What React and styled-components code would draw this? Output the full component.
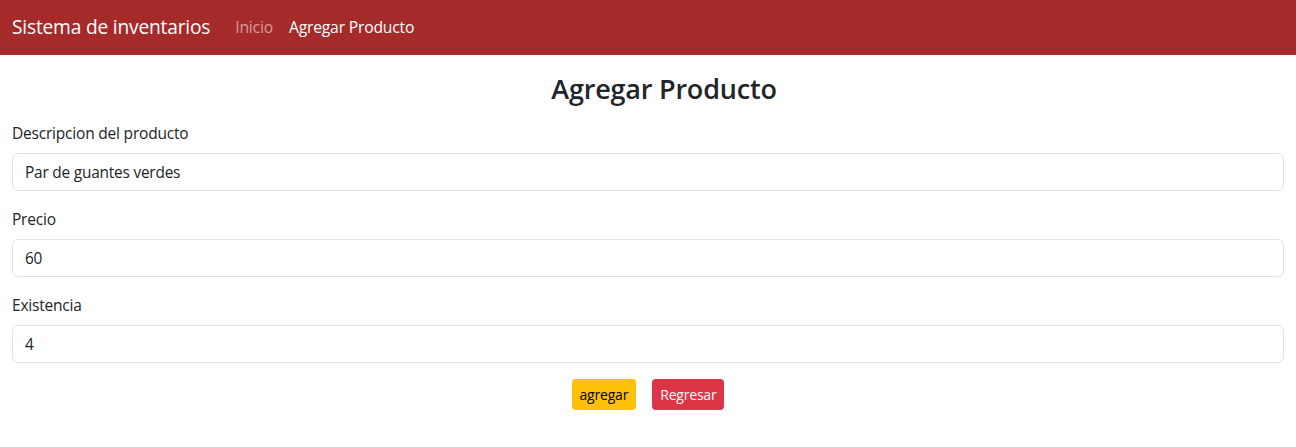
import React from "react";
import styled, { createGlobalStyle } from "styled-components";

const Global = createGlobalStyle`
  * { box-sizing: border-box; }
  body {
    margin: 0;
    font-family: "Open Sans", "Noto Sans", "Liberation Sans", sans-serif;
    color: #212529;
    background: #fff;
    font-size: 16px;
    line-height: 1.5;
  }
`;

const Navbar = styled.nav`
  height: 55px;
  background: #a52a2a;
  display: flex;
  align-items: center;
  padding: 0 12px;
`;

const Brand = styled.span`
  font-size: 19.2px;
  color: #fff;
  margin-right: 25px;
  letter-spacing: -0.2px;
`;

const NavLink = styled.a`
  font-size: 15.7px;
  color: ${(p) => (p.$active ? "#fff" : "rgba(255,255,255,0.55)")};
  text-decoration: none;
  margin-right: 16px;
  letter-spacing: -0.2px;
`;

const Main = styled.main`
  padding: 0 12px;
`;

const Title = styled.h2`
  margin: 17px 0 15px;
  padding-left: 32px;
  text-align: center;
  font-size: 27px;
  line-height: 34px;
  font-weight: 600;
  letter-spacing: -0.2px;
`;

const Field = styled.div`
  margin-bottom: 16px;
`;

const Label = styled.label`
  display: block;
  font-size: 15.5px;
  line-height: 24px;
  margin-bottom: 8px;
  letter-spacing: -0.2px;
`;

const Input = styled.input`
  display: block;
  width: 100%;
  height: 38px;
  padding: 6px 12px;
  font-family: inherit;
  font-size: 15.4px;
  color: #212529;
  border: 1px solid #dee2e6;
  border-radius: 6px;
  background: #fff;
  outline: none;
  letter-spacing: -0.2px;
`;

const Actions = styled.div`
  display: flex;
  justify-content: center;
  gap: 16px;
`;

const Button = styled.button`
  height: 31px;
  padding: 0 8px;
  font-family: inherit;
  font-size: 14px;
  border: none;
  border-radius: 4px;
  background: ${(p) => p.$bg};
  color: ${(p) => p.$fg};
  letter-spacing: -0.2px;
  cursor: pointer;
`;

export default function App() {
  return (
    <>
      <Global />
      <Navbar>
        <Brand>Sistema de inventarios</Brand>
        <NavLink href="#">Inicio</NavLink>
        <NavLink href="#" $active>Agregar Producto</NavLink>
      </Navbar>
      <Main>
        <Title>Agregar Producto</Title>
        <Field>
          <Label>Descripcion del producto</Label>
          <Input defaultValue="Par de guantes verdes" />
        </Field>
        <Field>
          <Label>Precio</Label>
          <Input defaultValue="60" />
        </Field>
        <Field>
          <Label>Existencia</Label>
          <Input defaultValue="4" />
        </Field>
        <Actions>
          <Button $bg="#ffc107" $fg="#000">agregar</Button>
          <Button $bg="#dc3545" $fg="#fff">Regresar</Button>
        </Actions>
      </Main>
    </>
  );
}
